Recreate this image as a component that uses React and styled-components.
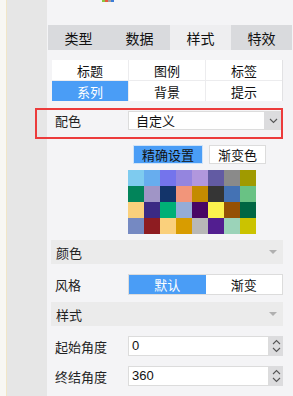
import React from 'react'
import styled, { createGlobalStyle } from 'styled-components'

const Global = createGlobalStyle`
  html, body { margin: 0; padding: 0; background: #f4f4f6; }
  body {
    font-family: "Noto Sans CJK SC", "Noto Sans", sans-serif;
    font-size: 13px;
    color: #222;
  }
`

const palette = [
  '#7ecbef', '#67adee', '#7474ec', '#9485df', '#b197dd', '#625ba3', '#8a8a8a', '#a09a00',
  '#02845a', '#a095c6', '#13346a', '#f2957a', '#c48b00', '#353535', '#4472b4', '#69c284',
  '#fad07c', '#3b2a84', '#00b076', '#94acd7', '#490664', '#fcf24e', '#955105', '#006643',
  '#7589c2', '#8e1c21', '#fad07c', '#d89c00', '#b8b8b8', '#521e90', '#9bd3b9', '#cbc300',
]

const tabs = ['类型', '数据', '样式', '特效']
const subTabs = ['标题', '图例', '标签', '系列', '背景', '提示']

function Chevron({ up }) {
  return (
    <svg width="9" height="6" viewBox="0 0 9 6">
      <path d={up ? 'M1 5 L4.5 1.5 L8 5' : 'M1 1 L4.5 4.5 L8 1'} fill="none" stroke="#555" strokeWidth="1.1" />
    </svg>
  )
}

function Spin({ value }) {
  return (
    <InputBox>
      <InputText>{value}</InputText>
      <Spinner>
        <Chevron up />
        <Chevron />
      </Spinner>
    </InputBox>
  )
}

export default function App() {
  return (
    <Page>
      <Global />
      <Edge />
      <Sidebar />
      <Panel>
        <TopBar>
          <Logo>
            <i style={{ background: '#8cc63f' }} />
            <i style={{ background: '#e9573f' }} />
            <i style={{ background: '#a0a0a0' }} />
            <i style={{ background: '#3b7dd8' }} />
          </Logo>
        </TopBar>
        <Tabs>
          {tabs.map((t) => (
            <Tab key={t} active={t === '样式'}>{t}</Tab>
          ))}
        </Tabs>
        <SubTabs>
          {subTabs.map((t) => (
            <SubTab key={t} active={t === '系列'}>{t}</SubTab>
          ))}
        </SubTabs>

        <Row top={10}>
          <Label>配色</Label>
          <Select>
            <SelectText>自定义</SelectText>
            <SelectArrow><Chevron /></SelectArrow>
          </Select>
        </Row>

        <Buttons>
          <SmallButton active>精确设置</SmallButton>
          <SmallButton>渐变色</SmallButton>
        </Buttons>

        <Swatches>
          {palette.map((c, i) => (
            <Swatch key={i} color={c} />
          ))}
        </Swatches>

        <Section top={6}>
          颜色
          <Caret />
        </Section>

        <Row top={10}>
          <Label>风格</Label>
          <Toggle>
            <ToggleItem active>默认</ToggleItem>
            <ToggleItem>渐变</ToggleItem>
          </Toggle>
        </Row>

        <Section top={7}>
          样式
          <Caret />
        </Section>

        <Row top={10}>
          <Label>起始角度</Label>
          <Spin value="0" />
        </Row>
        <Row top={10}>
          <Label>终结角度</Label>
          <Spin value="360" />
        </Row>

        <Highlight />
      </Panel>
    </Page>
  )
}

const Page = styled.div`
  display: flex;
  width: 293px;
  height: 396px;
  overflow: hidden;
  position: relative;
`

const Edge = styled.div`
  width: 6px;
  flex-shrink: 0;
  background: #f8f7f3;
  border-right: 1px solid #f1e6c8;
`

const Sidebar = styled.div`
  width: 40px;
  flex-shrink: 0;
  background: #e6e6e6;
`

const Panel = styled.div`
  flex: 1;
  background: #f4f4f6;
  padding: 0 10px 0 4px;
  display: flex;
  flex-direction: column;
`

const TopBar = styled.div`
  height: 25px;
  padding-left: 51px;
`

const Logo = styled.div`
  display: flex;
  width: 12px;
  height: 2px;
  i { flex: 1; }
`

const Tabs = styled.div`
  display: grid;
  grid-template-columns: repeat(4, 61px);
  height: 25px;
  margin: 0 -9px 0 -3px;
`

const Tab = styled.div`
  display: flex;
  align-items: center;
  justify-content: center;
  font-size: 14px;
  color: #111;
  background: ${(p) => (p.active ? '#eeeef0' : '#d9dadd')};
`

const SubTabs = styled.div`
  display: grid;
  grid-template-columns: 76px 76px 76px;
  grid-auto-rows: 20px;
  gap: 1px;
  margin: 10px 0 0 1px;
  background: #ececee;
  width: 230px;
  border-right: 1px solid #e2e2e4;
`

const SubTab = styled.div`
  display: flex;
  align-items: center;
  justify-content: center;
  background: ${(p) => (p.active ? '#4a9df6' : '#fff')};
  color: ${(p) => (p.active ? '#fff' : '#111')};
  font-size: 13px;
`

const Row = styled.div`
  display: flex;
  align-items: center;
  margin-top: ${(p) => p.top}px;
`

const Label = styled.div`
  width: 73px;
  padding-left: 4px;
  flex-shrink: 0;
  font-size: 13px;
  color: #222;
`

const Select = styled.div`
  width: 155px;
  height: 19px;
  display: flex;
  background: #fff;
  border: 1px solid #dcdcdc;
  box-sizing: border-box;
`

const SelectText = styled.div`
  flex: 1;
  padding-left: 7px;
  line-height: 17px;
  font-size: 13px;
  color: #111;
`

const SelectArrow = styled.div`
  width: 18px;
  background: #dcdcde;
  display: flex;
  align-items: center;
  justify-content: center;
`

const Buttons = styled.div`
  display: flex;
  gap: 6px;
  margin: 15px 0 0 82px;
`

const SmallButton = styled.div`
  height: 19px;
  box-sizing: border-box;
  padding: 0 8px;
  display: flex;
  align-items: center;
  justify-content: center;
  border: 1px solid ${(p) => (p.active ? '#cfe3f8' : '#dcdcdc')};
  background: ${(p) => (p.active ? '#4a9df6' : '#fff')};
  color: #111;
  font-size: 13px;
  min-width: ${(p) => (p.active ? 67 : 56)}px;
`

const Swatches = styled.div`
  display: grid;
  grid-template-columns: repeat(8, 16px);
  grid-auto-rows: 16px;
  margin: 6px 0 0 77px;
`

const Swatch = styled.div`
  background: ${(p) => p.color};
`

const Section = styled.div`
  position: relative;
  height: 24px;
  margin-top: ${(p) => p.top}px;
  background: #ebebeb;
  display: flex;
  align-items: center;
  padding-left: 5px;
  font-size: 13px;
  color: #222;
`

const Caret = styled.span`
  position: absolute;
  right: 6px;
  top: 10px;
  width: 0;
  height: 0;
  border-left: 4px solid transparent;
  border-right: 4px solid transparent;
  border-top: 4px solid #b0b0b0;
`

const Toggle = styled.div`
  width: 155px;
  height: 21px;
  box-sizing: border-box;
  border: 1px solid #dcdcdc;
  display: grid;
  grid-template-columns: 1fr 1fr;
  background: #fff;
`

const ToggleItem = styled.div`
  display: flex;
  align-items: center;
  justify-content: center;
  background: ${(p) => (p.active ? '#4a9df6' : '#fff')};
  color: ${(p) => (p.active ? '#fff' : '#111')};
  font-size: 13px;
`

const InputBox = styled.div`
  width: 155px;
  height: 20px;
  display: flex;
`

const InputText = styled.div`
  flex: 1;
  background: #fff;
  border: 1px solid #dcdcdc;
  box-sizing: border-box;
  padding-left: 3px;
  line-height: 18px;
  font-family: "Liberation Sans", Arial, sans-serif;
  font-size: 13px;
  color: #111;
`

const Spinner = styled.div`
  width: 14px;
  background: #dcdcde;
  display: flex;
  flex-direction: column;
  align-items: center;
  justify-content: center;
  gap: 2px;
`

const Highlight = styled.div`
  position: absolute;
  left: 35px;
  top: 108px;
  width: 248px;
  height: 31px;
  box-sizing: border-box;
  border: 2px solid #ec3b3b;
  pointer-events: none;
`
